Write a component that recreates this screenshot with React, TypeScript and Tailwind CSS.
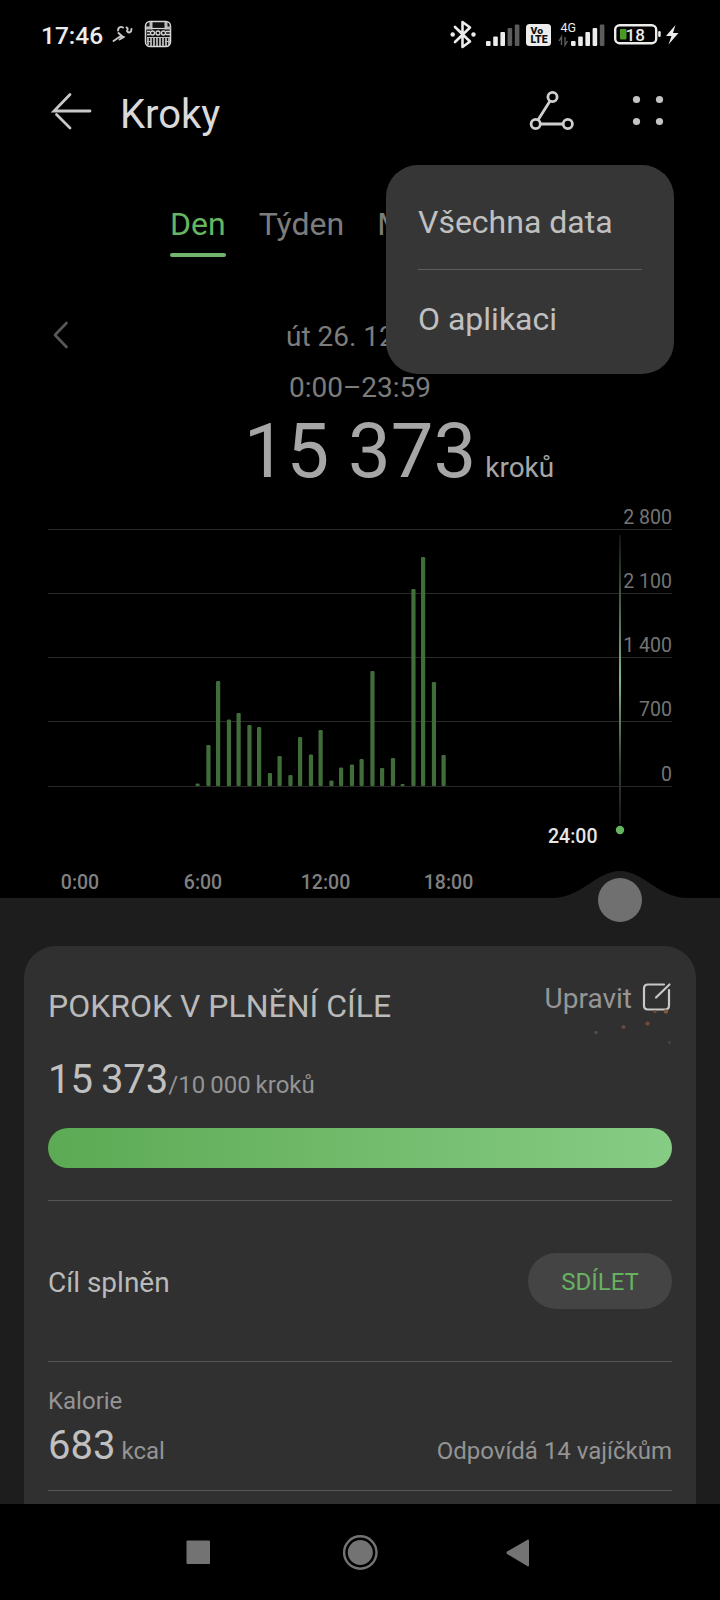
import React from "react";

const BAR_STEP = 10.25;
const BAR_START = 197.6;
const BASE_LINE = 786;

// top edge of every half-hour bar, first one is 6:00
const barTops = [
  783.5, 745, 681, 719.5, 713, 725, 727, 773, 756, 775, 737, 754.5, 730,
  780.5, 767.5, 764.5, 759, 671, 768, 758, 784, 589, 557, 682, 755,
];

const gridLines = [
  { y: 529, label: "2 800" },
  { y: 593, label: "2 100" },
  { y: 657, label: "1 400" },
  { y: 721, label: "700" },
  { y: 786, label: "0" },
];

const hours = [
  { x: 80, label: "0:00" },
  { x: 203, label: "6:00" },
  { x: 325.5, label: "12:00" },
  { x: 448.5, label: "18:00" },
];

function SignalBars({ x, active }: { x: number; active: number }) {
  return (
    <g>
      {[41, 36.5, 32, 28, 24.5].map((top, i) => (
        <rect
          key={top}
          x={x + i * 7.2}
          y={top}
          width="4.600"
          height={46 - top}
          rx="1"
          fill={i < active ? "#ececec" : "#5c5c5c"}
        />
      ))}
    </g>
  );
}

function StatusBar() {
  return (
    <div className="flex h-[72px] items-center pl-[41px]">
      <span className="w-[69px] text-[24.5px] font-medium text-[#ececec]">17:46</span>
      <svg className="h-[72px] w-[66px]" viewBox="110 0 66 72" fill="none">
        {/* runner */}
        <g stroke="#c9c9c9" strokeWidth="1.900" strokeLinecap="round" strokeLinejoin="round">
          <path d="M118 30.500c0-3 2.500-4.500 5-3" />
          <path d="M126.500 27.500c2 .5 1 2.500.5 3.500 1.500 2.500 4.500 1.500 4.500-2" />
          <path d="M113.500 41l6.500-4.500 4 .5-4.500 2.500M118.500 33l4.500 4" />
        </g>
        {/* calculator */}
        <rect x="145.500" y="21.500" width="25" height="25" rx="4.500" fill="#111" stroke="#d6d6d6" strokeWidth="1.500" />
        <path d="M146 28h5v-6M166 22v6h5" stroke="#bdbdbd" strokeWidth="3" />
        <path d="M151 28.500h15" stroke="#d6d6d6" strokeWidth="1.200" />
        <g stroke="#d6d6d6" strokeWidth="1.300">
          <circle cx="152.500" cy="33" r="2" />
          <circle cx="158" cy="33" r="2" />
          <circle cx="163.500" cy="33" r="2" />
          <path d="M147 31.500h3M166 31.500h4M147 34.500h3M166 34.500h4" />
        </g>
        <path d="M148 38v7M151 38v8M154 38v8M157 38v8M160 38v8M163 38v8M166 38v8M169 38v7" stroke="#d6d6d6" strokeWidth="1.500" />
        <path d="M147 37.500h23M147 41.500h4M165 41.500h5" stroke="#bdbdbd" strokeWidth="1" />
      </svg>
      <svg className="ml-auto h-[72px] w-[276px]" viewBox="444 0 276 72" fill="none">
        <path
          d="M455 27l15 14.500-7.500 5.500V22l7.500 5.500L455 42"
          stroke="#ececec"
          strokeWidth="2.600"
          strokeLinejoin="round"
          strokeLinecap="round"
        />
        <circle cx="452.700" cy="34.500" r="2.200" fill="#ececec" />
        <circle cx="473.500" cy="34.500" r="2.200" fill="#ececec" />
        <SignalBars x={486} active={3} />
        <rect x="526" y="24" width="25" height="22" rx="3.500" fill="#ececec" />
        <text x="530.500" y="33.500" fontSize="9.500" fontWeight="900" textLength="12.500" lengthAdjust="spacingAndGlyphs" fill="#111">Vo</text>
        <text x="530.500" y="43" fontSize="10" fontWeight="900" textLength="17" lengthAdjust="spacingAndGlyphs" fill="#111">LTE</text>
        <text x="560.500" y="31.500" fontSize="12.500" fill="#ececec">4G</text>
        <path d="M561.500 45v-8l-2.500 4M565 37v8l2.500-4" stroke="#5c5c5c" strokeWidth="1.400" />
        <SignalBars x={571} active={4} />
        <rect x="615.200" y="25.200" width="41" height="18" rx="4.500" stroke="#ececec" strokeWidth="2.400" />
        <rect x="620" y="29" width="6.500" height="10.500" rx="1" fill="#4a9a26" />
        <text x="625.500" y="40.500" fontSize="17" fontWeight="500" fill="#ececec" textLength="19.500">18</text>
        <rect x="658.200" y="31" width="2.500" height="6" rx="1.200" fill="#ececec" />
        <path d="M675.500 25l-9.500 11h5.500l-3 8.500 10-11.500h-5.500z" fill="#ececec" />
      </svg>
    </div>
  );
}

function Header() {
  return (
    <div className="flex h-[82px] items-center">
      <svg className="h-[82px] w-[120px]" viewBox="0 72 120 82" fill="none" stroke="#c8c8c8" strokeWidth="2.800" strokeLinecap="round">
        <path d="M90 111H54L70 94.500M56.500 114.500L70 128" />
      </svg>
      <h1 className="pt-[3px] text-[40px] leading-none text-[#dadada]">Kroky</h1>
      <svg className="ml-auto h-[82px] w-[200px]" viewBox="520 72 200 82" fill="none">
        <g stroke="#cfcfcf" strokeWidth="2.800">
          <circle cx="552.500" cy="97" r="4.600" />
          <circle cx="535.700" cy="124" r="4.600" />
          <circle cx="567.800" cy="124" r="4.600" />
          <path d="M550 101l-12 19M540.500 124h22.500" />
        </g>
        <g fill="#c4c4c4">
          <circle cx="636.500" cy="99.500" r="3.600" />
          <circle cx="659.500" cy="99.500" r="3.600" />
          <circle cx="636.500" cy="121.500" r="3.600" />
          <circle cx="659.500" cy="121.500" r="3.600" />
        </g>
      </svg>
    </div>
  );
}

function Menu() {
  return (
    <div className="absolute top-[165px] left-[386px] h-[209px] w-72 rounded-[32px] bg-[#363636] px-8 text-[32px] text-[#c0c0c0]">
      <div className="flex h-[104px] items-center pt-[10px]">Všechna data</div>
      <div className="h-px bg-[#5c5c5c]" />
      <div className="flex h-[104px] items-center pb-[7px]">O aplikaci</div>
    </div>
  );
}

function Chart() {
  return (
    <svg className="block h-[446px] w-[720px]" viewBox="0 500 720 446">
      <defs>
        <linearGradient id="cursor" x1="0" y1="535" x2="0" y2="824" gradientUnits="userSpaceOnUse">
          <stop offset="0" stopColor="#101210" />
          <stop offset="0.500" stopColor="#84b884" />
          <stop offset="0.800" stopColor="#334033" />
          <stop offset="1" stopColor="#1a1a1a" />
        </linearGradient>
      </defs>
      {gridLines.map((line) => (
        <g key={line.y}>
          <rect x="48" y={line.y} width="624" height="1" fill="#292929" />
          <text x="672" y={line.y - 4.6} textAnchor="end" fontSize="19.500" fill="#747474">
            {line.label}
          </text>
        </g>
      ))}
      {barTops.map((top, i) => (
        <rect
          key={i}
          x={BAR_START + i * BAR_STEP + (i % 2) * 0.6 - 2.1}
          y={top}
          width="4.200"
          height={BASE_LINE - top}
          rx="1.200"
          fill="#416d3b"
        />
      ))}
      <rect x="619" y="535" width="2" height="289" fill="url(#cursor)" />
      <circle cx="620" cy="830" r="4.200" fill="#64b560" />
      <text x="597.500" y="843" textAnchor="end" fontSize="19.500" fontWeight="500" fill="#e6e6e6">24:00</text>
      {hours.map((hour) => (
        <text key={hour.x} x={hour.x} y="889" textAnchor="middle" fontSize="19.500" fontWeight="500" fill="#808080">
          {hour.label}
        </text>
      ))}
      <path d="M0 898H552C582 898 596 871 620 871S658 898 688 898H720V946H0Z" fill="#1d1d1d" />
      <circle cx="620" cy="900" r="22" fill="#707070" />
    </svg>
  );
}

function GoalCard() {
  return (
    <div className="h-full overflow-hidden rounded-t-[32px] bg-[#303030] px-6">
      <div className="relative flex h-[93px] justify-between">
        <h2 className="pt-10 text-[32px] leading-10 text-[#bababa]">POKROK V PLNĚNÍ CÍLE</h2>
        <div className="flex pt-8">
          <span className="pt-px text-[28px] leading-10 text-[#969696]">Upravit</span>
          <svg className="ml-1.5 h-10 w-[34px]" viewBox="638 978 34 40" fill="none" stroke="#c8c8c8" strokeWidth="2.200" strokeLinecap="round">
            <path d="M664 984.500h-16q-4 0-4 4v17q0 4 4 4h17q4 0 4-4V990M656 997.500l13.500-13" />
          </svg>
        </div>
        {/* leftover confetti sparks */}
        <svg className="absolute top-[60px] right-0 h-10 w-20" viewBox="592 1006 80 40">
          <circle cx="596" cy="1032.500" r="1.700" fill="#5a4a46" />
          <circle cx="623.500" cy="1027" r="2" fill="#684840" />
          <circle cx="647.500" cy="1023.500" r="2.200" fill="#704a38" />
          <circle cx="655" cy="1011.500" r="1.600" fill="#70503c" />
          <circle cx="666" cy="1011.500" r="2.200" fill="#80583c" />
          <circle cx="669.500" cy="1042.500" r="1.500" fill="#484440" />
        </svg>
      </div>
      <div className="flex h-[89px] items-baseline pt-[17px]">
        <span className="text-[40px] leading-[48px] text-[#c0c0c0] [word-spacing:-2px]">15 373</span>
        <span className="text-2xl text-[#949494] [word-spacing:-1px]">/10 000 kroků</span>
      </div>
      <div className="h-10 rounded-full bg-linear-to-r from-[#5caa54] to-[#87cc84]" />
      <div className="mt-8 h-px bg-[#565656]" />
      <div className="flex h-40 items-center justify-between">
        <span className="pt-[4px] text-[28px] text-[#bababa]">Cíl splněn</span>
        <button className="h-14 w-36 rounded-full bg-[#454445] pt-0.5 text-2xl text-[#66b25f]">SDÍLET</button>
      </div>
      <div className="h-px bg-[#565656]" />
      <div className="flex h-32 flex-col pt-[23px]">
        <span className="text-2xl text-[#949494]">Kalorie</span>
        <div className="flex items-baseline pt-px text-2xl text-[#949494]">
          <span className="text-[40px] leading-[56px] text-[#c0c0c0]">683</span>
          <span className="ml-1.5">kcal</span>
          <span className="ml-auto">Odpovídá 14 vajíčkům</span>
        </div>
      </div>
      <div className="h-px bg-[#565656]" />
    </div>
  );
}

export default function App() {
  return (
    <div className="relative h-[1600px] w-[720px] overflow-hidden bg-black font-['Roboto',sans-serif]">
      <StatusBar />
      <Header />

      <div className="flex h-[162px] gap-[33px] pt-[50px] pl-[170px] text-[32px] leading-10 text-[#7c7c7c]">
        <div className="text-[#66b560]">
          Den
          <div className="mt-[9px] h-1 rounded-full bg-[#72b56c]" />
        </div>
        <div>Týden</div>
        <div className="w-3 overflow-hidden">Měsíc</div>
      </div>

      <div className="flex h-[52px] text-[28px] leading-10 text-[#7c7c7c]">
        <svg className="h-10 w-[286px]" viewBox="0 316 286 40" fill="none" stroke="#585858" strokeWidth="2.600" strokeLinecap="round" strokeLinejoin="round">
          <path d="M66.500 323L55 335l11.500 12" />
        </svg>
        <span className="pt-px">út 26. 12.</span>
      </div>
      <p className="h-[43px] text-center text-[28px] leading-10 text-[#7c7c7c]">0:00–23:59</p>
      <div className="flex h-[89px] items-baseline pl-[9px] text-[#a6a6a6]">
        <span className="flex-1" />
        <span className="text-[76px] leading-20">15 373</span>
        <span className="flex-1 pl-[9px] text-[28px]">kroků</span>
      </div>

      <Chart />

      <div className="h-[558px] bg-[#1d1d1d] px-6">
        <GoalCard />
      </div>

      <div className="h-24 bg-black">
        <svg className="h-24 w-[720px]" viewBox="0 1504 720 96" fill="#737373">
          <rect x="186.500" y="1540.500" width="23.500" height="23.500" rx="1" />
          <circle cx="360.300" cy="1552.500" r="16.200" fill="none" stroke="#737373" strokeWidth="2.400" />
          <circle cx="360.300" cy="1552.500" r="12.500" />
          <path d="M507 1551.500L528 1539.500q1 0 1 1v25q0 1-1 1L507 1554q-1-1.200 0-2.500z" />
        </svg>
      </div>

      <Menu />
    </div>
  );
}
